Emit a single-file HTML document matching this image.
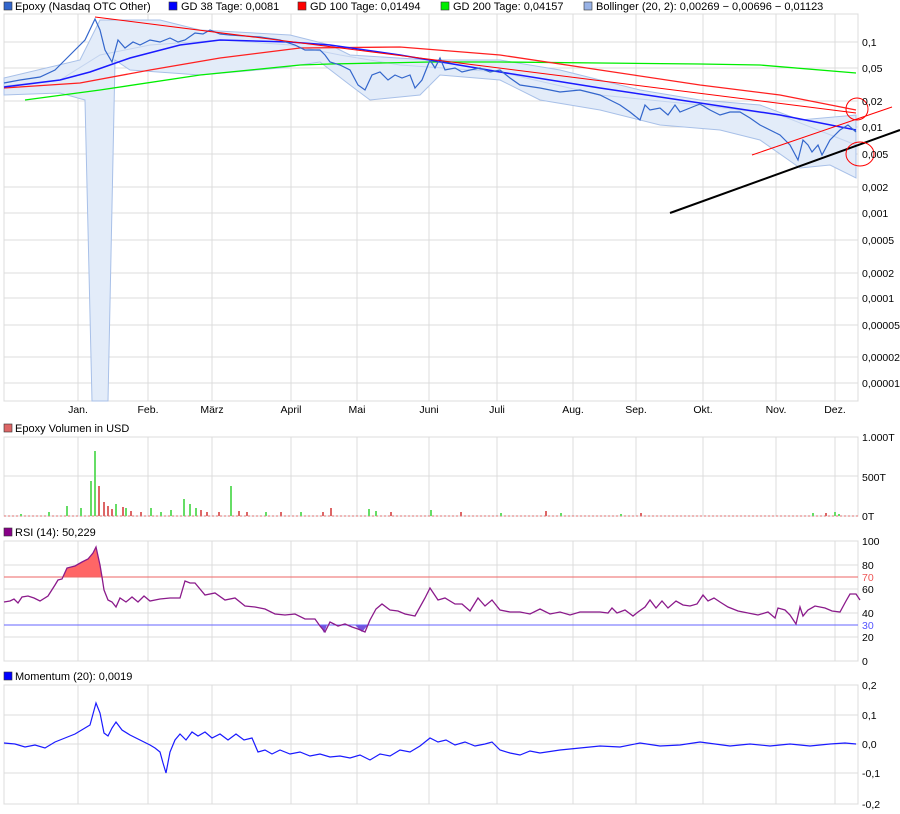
<!DOCTYPE html>
<html><head><meta charset="utf-8"><style>
body{margin:0;background:#fff;}
svg{display:block;font-family:"Liberation Sans",sans-serif;font-size:11px;}
.ax{font-size:10.5px;}
</style></head><body>
<svg width="900" height="814" viewBox="0 0 900 814" xmlns="http://www.w3.org/2000/svg">
<rect width="900" height="814" fill="#fff"/>
<g fill="#000">
<rect x="4" y="2" width="8" height="8" fill="#3366cc" stroke="#333" stroke-width="0.6"/><text x="15" y="10">Epoxy (Nasdaq OTC Other)</text>
<rect x="169" y="2" width="8" height="8" fill="#0000ff" stroke="#333" stroke-width="0.6"/><text x="181" y="10">GD 38 Tage: 0,0081</text>
<rect x="298" y="2" width="8" height="8" fill="#ff0000" stroke="#333" stroke-width="0.6"/><text x="310" y="10">GD 100 Tage: 0,01494</text>
<rect x="441" y="2" width="8" height="8" fill="#00ee00" stroke="#333" stroke-width="0.6"/><text x="453" y="10">GD 200 Tage: 0,04157</text>
<rect x="584" y="2" width="8" height="8" fill="#99b3e6" stroke="#333" stroke-width="0.6"/><text x="596" y="10">Bollinger (20, 2): 0,00269 − 0,00696 − 0,01123</text>
</g>
<g stroke="#dcdcdc" stroke-width="1">
<line x1="4" x2="858" y1="42" y2="42"/><line x1="4" x2="858" y1="68" y2="68"/><line x1="4" x2="858" y1="101" y2="101"/><line x1="4" x2="858" y1="127" y2="127"/><line x1="4" x2="858" y1="154" y2="154"/><line x1="4" x2="858" y1="187" y2="187"/><line x1="4" x2="858" y1="213" y2="213"/><line x1="4" x2="858" y1="240" y2="240"/><line x1="4" x2="858" y1="273" y2="273"/><line x1="4" x2="858" y1="298" y2="298"/><line x1="4" x2="858" y1="325" y2="325"/><line x1="4" x2="858" y1="357" y2="357"/><line x1="4" x2="858" y1="383" y2="383"/>
<line x1="78" x2="78" y1="14" y2="401"/><line x1="148" x2="148" y1="14" y2="401"/><line x1="212" x2="212" y1="14" y2="401"/><line x1="291" x2="291" y1="14" y2="401"/><line x1="357" x2="357" y1="14" y2="401"/><line x1="429" x2="429" y1="14" y2="401"/><line x1="497" x2="497" y1="14" y2="401"/><line x1="573" x2="573" y1="14" y2="401"/><line x1="636" x2="636" y1="14" y2="401"/><line x1="703" x2="703" y1="14" y2="401"/><line x1="776" x2="776" y1="14" y2="401"/><line x1="835" x2="835" y1="14" y2="401"/>
</g>
<rect x="4" y="14" width="854" height="387" fill="none" stroke="#dcdcdc"/>
<polygon fill="#e3ecf9" stroke="#a8c0e8" stroke-width="1" points="4,78 80,60 100,20 160,20 200,30 290,35 330,45 350,55 430,60 500,60 560,70 640,90 700,100 760,105 800,120 856,115 856,178 830,165 800,168 760,140 720,130 660,125 600,110 540,100 500,80 440,75 420,95 370,100 350,85 320,62 280,68 200,75 130,70 115,60 108,401 92,401 85,100 60,93 4,95"/>
<polyline fill="none" stroke="#c4d4ef" stroke-width="1" points="4,86 60,80 100,55 150,45 220,40 290,45 340,55 400,65 500,72 600,95 700,105 780,115 856,145"/>
<polyline fill="none" stroke="#00ee00" stroke-width="1.3" points="25,100 100,90 200,75 300,65 330,64 430,62 500,62 600,63 700,64 760,65 856,73"/>
<polyline fill="none" stroke="#ff2020" stroke-width="1.3" points="4,88 80,83 150,70 220,58 300,48 400,47 500,55 600,70 700,85 780,95 856,110"/>
<polyline fill="none" stroke="#1a1aff" stroke-width="1.5" points="4,87 60,80 90,72 130,58 180,45 220,40 290,42 330,45 400,55 500,72 600,88 700,103 780,115 856,130"/>
<polyline fill="none" stroke="#3366cc" stroke-width="1.2" points="4,83 20,80 40,77 55,70 65,60 75,50 85,40 95,19 100,30 105,50 112,62 118,40 125,48 133,42 140,45 150,40 160,42 170,38 178,42 185,40 195,33 203,34 210,30 220,34 230,35 245,36 260,37 280,40 295,45 305,50 320,50 325,55 330,62 340,65 350,70 358,85 365,90 372,75 380,72 388,80 395,75 402,78 410,75 415,88 422,80 430,60 435,68 440,58 445,70 455,68 462,72 470,70 480,68 490,72 500,70 510,78 520,85 540,88 560,92 580,90 600,95 610,100 620,105 630,112 640,120 645,105 650,110 660,108 668,115 675,105 680,112 690,108 700,104 710,110 720,115 730,112 740,112 750,118 760,125 770,130 780,135 785,140 790,145 798,160 803,140 808,145 812,152 818,145 822,155 830,140 840,130 848,125 856,132"/>
<line x1="95" y1="17" x2="856" y2="113" stroke="#ff0000" stroke-width="1"/>
<line x1="752" y1="155" x2="892" y2="107" stroke="#ff0000" stroke-width="1"/>
<line x1="670" y1="213" x2="900" y2="130" stroke="#000" stroke-width="2"/>
<ellipse cx="857" cy="109" rx="11" ry="11" fill="none" stroke="#ff0000" stroke-width="1"/>
<ellipse cx="860" cy="154" rx="14" ry="12" fill="none" stroke="#ff0000" stroke-width="1"/>
<g fill="#000" class="ax">
<text x="862" y="46">0,1</text><text x="862" y="72">0,05</text><text x="862" y="105">0,02</text><text x="862" y="131">0,01</text><text x="862" y="158">0,005</text><text x="862" y="191">0,002</text><text x="862" y="217">0,001</text><text x="862" y="244">0,0005</text><text x="862" y="277">0,0002</text><text x="862" y="302">0,0001</text><text x="862" y="329">0,00005</text><text x="862" y="361">0,00002</text><text x="862" y="387">0,00001</text>
<text x="78" y="413" text-anchor="middle">Jan.</text><text x="148" y="413" text-anchor="middle">Feb.</text><text x="212" y="413" text-anchor="middle">März</text><text x="291" y="413" text-anchor="middle">April</text><text x="357" y="413" text-anchor="middle">Mai</text><text x="429" y="413" text-anchor="middle">Juni</text><text x="497" y="413" text-anchor="middle">Juli</text><text x="573" y="413" text-anchor="middle">Aug.</text><text x="636" y="413" text-anchor="middle">Sep.</text><text x="703" y="413" text-anchor="middle">Okt.</text><text x="776" y="413" text-anchor="middle">Nov.</text><text x="835" y="413" text-anchor="middle">Dez.</text>
</g>
<rect x="4" y="424" width="8" height="8" fill="#dd6666" stroke="#333" stroke-width="0.6"/><text x="15" y="432">Epoxy Volumen in USD</text>
<g stroke="#dcdcdc">
<line x1="4" x2="858" y1="476" y2="476"/>
<line x1="78" x2="78" y1="437" y2="516"/><line x1="148" x2="148" y1="437" y2="516"/><line x1="212" x2="212" y1="437" y2="516"/><line x1="291" x2="291" y1="437" y2="516"/><line x1="357" x2="357" y1="437" y2="516"/><line x1="429" x2="429" y1="437" y2="516"/><line x1="497" x2="497" y1="437" y2="516"/><line x1="573" x2="573" y1="437" y2="516"/><line x1="636" x2="636" y1="437" y2="516"/><line x1="703" x2="703" y1="437" y2="516"/><line x1="776" x2="776" y1="437" y2="516"/><line x1="835" x2="835" y1="437" y2="516"/>
</g>
<rect x="4" y="437" width="854" height="79" fill="none" stroke="#dcdcdc"/>
<line x1="4" x2="858" y1="516" y2="516" stroke="#e07070" stroke-dasharray="2,2"/>
<g fill="#66dd66">
<rect x="20" y="514" width="2" height="2"/><rect x="48" y="512" width="2" height="4"/><rect x="66" y="506" width="2" height="10"/><rect x="80" y="508" width="2" height="8"/><rect x="90" y="481" width="2" height="35"/><rect x="94" y="451" width="2" height="65"/><rect x="115" y="504" width="2" height="12"/><rect x="125" y="508" width="2" height="8"/><rect x="150" y="508" width="2" height="8"/><rect x="160" y="512" width="2" height="4"/><rect x="170" y="510" width="2" height="6"/><rect x="183" y="499" width="2" height="17"/><rect x="189" y="504" width="2" height="12"/><rect x="195" y="508" width="2" height="8"/><rect x="230" y="486" width="2" height="30"/><rect x="265" y="512" width="2" height="4"/><rect x="300" y="512" width="2" height="4"/><rect x="368" y="509" width="2" height="7"/><rect x="375" y="511" width="2" height="5"/><rect x="430" y="510" width="2" height="6"/><rect x="500" y="513" width="2" height="3"/><rect x="560" y="513" width="2" height="3"/><rect x="620" y="514" width="2" height="2"/><rect x="812" y="513" width="2" height="3"/><rect x="834" y="512" width="2" height="4"/><rect x="838" y="514" width="2" height="2"/>
</g>
<g fill="#dd6666">
<rect x="98" y="486" width="2" height="30"/><rect x="103" y="502" width="2" height="14"/><rect x="107" y="506" width="2" height="10"/><rect x="111" y="509" width="2" height="7"/><rect x="122" y="507" width="2" height="9"/><rect x="130" y="511" width="2" height="5"/><rect x="140" y="512" width="2" height="4"/><rect x="200" y="510" width="2" height="6"/><rect x="206" y="512" width="2" height="4"/><rect x="218" y="512" width="2" height="4"/><rect x="238" y="511" width="2" height="5"/><rect x="246" y="512" width="2" height="4"/><rect x="280" y="512" width="2" height="4"/><rect x="322" y="512" width="2" height="4"/><rect x="330" y="508" width="2" height="8"/><rect x="390" y="512" width="2" height="4"/><rect x="460" y="512" width="2" height="4"/><rect x="545" y="511" width="2" height="5"/><rect x="640" y="513" width="2" height="3"/><rect x="825" y="513" width="2" height="3"/>
</g>
<g class="ax"><text x="862" y="441">1.000T</text><text x="862" y="481">500T</text><text x="862" y="520">0T</text></g>
<rect x="4" y="528" width="8" height="8" fill="#880088" stroke="#333" stroke-width="0.6"/><text x="15" y="536">RSI (14): 50,229</text>
<g stroke="#dcdcdc">
<line x1="4" x2="858" y1="565" y2="565"/><line x1="4" x2="858" y1="589" y2="589"/><line x1="4" x2="858" y1="613" y2="613"/><line x1="4" x2="858" y1="637" y2="637"/>
<line x1="78" x2="78" y1="541" y2="661"/><line x1="148" x2="148" y1="541" y2="661"/><line x1="212" x2="212" y1="541" y2="661"/><line x1="291" x2="291" y1="541" y2="661"/><line x1="357" x2="357" y1="541" y2="661"/><line x1="429" x2="429" y1="541" y2="661"/><line x1="497" x2="497" y1="541" y2="661"/><line x1="573" x2="573" y1="541" y2="661"/><line x1="636" x2="636" y1="541" y2="661"/><line x1="703" x2="703" y1="541" y2="661"/><line x1="776" x2="776" y1="541" y2="661"/><line x1="835" x2="835" y1="541" y2="661"/>
</g>
<rect x="4" y="541" width="854" height="120" fill="none" stroke="#dcdcdc"/>
<polygon fill="#ff6666" points="63,577 67,568 75,566 82,562 88,559 93,553 96,547 100,565 102,577"/>
<polygon fill="#7755dd" points="320,625 324,633 327,625"/><polygon fill="#7755dd" points="355,625 362,632 368,625"/>
<line x1="4" x2="858" y1="577" y2="577" stroke="#ee6666"/>
<line x1="4" x2="858" y1="625" y2="625" stroke="#6666ff"/>
<polyline fill="none" stroke="#8b1a8b" stroke-width="1.3" points="4,602 10,601 14,599 18,603 22,597 28,596 34,598 40,601 48,596 55,585 58,580 62,579 67,568 75,566 82,562 88,559 93,553 96,547 100,565 102,577 104,590 108,600 112,602 116,607 120,598 126,602 132,597 138,602 144,596 150,601 160,599 170,598 180,598 185,581 190,583 195,583 205,595 215,593 225,600 235,598 245,606 255,607 265,609 275,614 285,615 295,614 305,619 315,619 320,626 325,632 330,622 338,626 345,624 352,627 358,629 365,632 370,620 376,609 382,604 390,610 398,611 405,614 415,616 425,598 430,588 438,600 445,598 455,604 462,604 470,611 478,598 485,606 492,600 500,610 510,612 520,612 530,614 540,609 550,614 560,612 570,615 580,612 590,612 600,612 608,613 612,608 617,613 625,610 633,616 638,612 645,607 650,600 656,608 662,601 668,608 676,601 683,605 690,606 697,604 703,595 708,601 714,598 720,602 728,607 738,611 748,613 758,615 768,612 775,618 778,608 785,610 790,615 796,624 800,607 803,616 808,610 815,606 825,608 832,611 840,612 846,601 850,594 856,594 860,600"/>
<g fill="#000" class="ax"><text x="862" y="545">100</text><text x="862" y="569">80</text><text x="862" y="593">60</text><text x="862" y="617">40</text><text x="862" y="641">20</text><text x="862" y="665">0</text></g>
<g class="ax"><text x="862" y="581" fill="#ee5555">70</text><text x="862" y="629" fill="#5555ff">30</text></g>
<rect x="4" y="672" width="8" height="8" fill="#0000ff" stroke="#333" stroke-width="0.6"/><text x="15" y="680">Momentum (20): 0,0019</text>
<g stroke="#dcdcdc">
<line x1="4" x2="858" y1="715" y2="715"/><line x1="4" x2="858" y1="744" y2="744"/><line x1="4" x2="858" y1="773" y2="773"/>
<line x1="78" x2="78" y1="685" y2="804"/><line x1="148" x2="148" y1="685" y2="804"/><line x1="212" x2="212" y1="685" y2="804"/><line x1="291" x2="291" y1="685" y2="804"/><line x1="357" x2="357" y1="685" y2="804"/><line x1="429" x2="429" y1="685" y2="804"/><line x1="497" x2="497" y1="685" y2="804"/><line x1="573" x2="573" y1="685" y2="804"/><line x1="636" x2="636" y1="685" y2="804"/><line x1="703" x2="703" y1="685" y2="804"/><line x1="776" x2="776" y1="685" y2="804"/><line x1="835" x2="835" y1="685" y2="804"/>
</g>
<rect x="4" y="685" width="854" height="119" fill="none" stroke="#dcdcdc"/>
<polyline fill="none" stroke="#1a1aff" stroke-width="1.2" points="4,743 15,744 25,747 35,745 45,748 55,742 65,738 75,734 85,728 90,725 93,714 96,703 100,713 104,733 108,736 112,728 116,722 122,730 130,735 140,740 150,745 155,748 160,752 163,763 166,773 170,752 175,740 180,734 186,740 192,732 198,736 205,732 212,738 220,734 228,740 236,734 244,740 252,738 258,752 265,750 272,754 280,750 290,754 300,752 310,756 320,754 330,757 340,756 350,758 360,755 370,760 380,754 390,756 400,750 410,752 420,746 430,738 438,742 446,740 455,745 465,742 475,746 485,744 492,742 500,750 510,753 520,755 530,751 540,753 560,750 580,748 600,746 620,747 640,743 660,746 680,745 700,742 715,744 730,746 750,744 770,746 790,744 810,746 830,744 845,743 856,744"/>
<g fill="#000" class="ax"><text x="862" y="689">0,2</text><text x="862" y="719">0,1</text><text x="862" y="748">0,0</text><text x="862" y="777">-0,1</text><text x="862" y="808">-0,2</text></g>
</svg>
</body></html>
